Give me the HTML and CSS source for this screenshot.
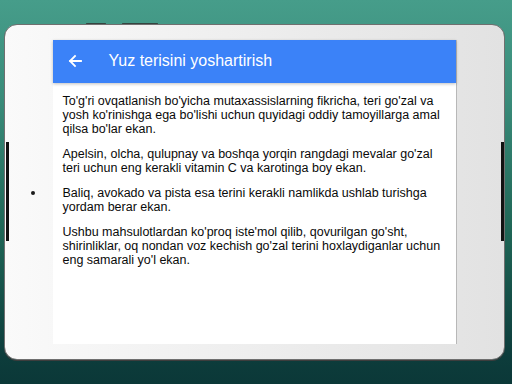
FILE: index.html
```html
<!DOCTYPE html>
<html>
<head>
<meta charset="utf-8">
<link rel="stylesheet" href="styles.css">
</head>
<body>
<div class="stage">
  <div class="tablet">
    <span class="top-btn top-btn-a"></span>
    <span class="top-btn top-btn-b"></span>
    <span class="side-btn side-left"></span>
    <span class="side-btn side-right"></span>
    <span class="dot"></span>
    <div class="screen">
      <header class="appbar">
        <svg class="back" width="16" height="16" viewBox="0 0 16 16">
          <path d="M14 8H3M8 3L3 8l5 5" fill="none" stroke="#fff" stroke-width="1.8" stroke-linecap="square"/>
        </svg>
        <h1 class="title">Yuz terisini yoshartirish</h1>
      </header>
      <main class="content">
        <p>To'g'ri ovqatlanish bo'yicha mutaxassislarning fikricha, teri go'zal va yosh ko'rinishga ega bo'lishi uchun quyidagi oddiy tamoyillarga amal qilsa bo'lar ekan.</p>
        <p>Apelsin, olcha, qulupnay va boshqa yorqin rangdagi mevalar go'zal teri uchun eng kerakli vitamin C va karotinga boy ekan.</p>
        <p>Baliq, avokado va pista esa terini kerakli namlikda ushlab turishga yordam berar ekan.</p>
        <p>Ushbu mahsulotlardan ko'proq iste'mol qilib, qovurilgan go'sht, shirinliklar, oq nondan voz kechish go'zal terini hoxlaydiganlar uchun eng samarali yo'l ekan.</p>
      </main>
    </div>
  </div>
</div>
</body>
</html>
```

FILE: styles.css
```css
html, body {
  margin: 0;
  padding: 0;
}
body {
  width: 512px;
  height: 384px;
  overflow: hidden;
  font-family: "Liberation Sans", Arial, sans-serif;
}
.stage {
  width: 512px;
  height: 384px;
  box-sizing: border-box;
  padding: 24px 7px 24px 4px;
  background: linear-gradient(to bottom, #469d8a 0%, #3a8c7a 25%, #1f6656 60%, #0d3d3c 92%, #0b3838 100%);
}
.tablet {
  position: relative;
  box-sizing: border-box;
  width: 501px;
  height: 336px;
  border: 1.5px solid #6f6f6f;
  border-radius: 13px;
  background: linear-gradient(to right, #fafafa 0%, #f0f0f0 40%, #e2e2e2 100%);
  box-shadow: 0 1px 0 #3d3d3d;
  padding: 14.5px 0 0 47.5px;
}
.top-btn {
  position: absolute;
  top: -2.5px;
  height: 1px;
  background: #34443f;
  border-radius: 1px;
}
.top-btn-a { left: 81px; width: 20px; }
.top-btn-b { left: 117px; width: 36px; }
.side-btn {
  position: absolute;
  top: 117px;
  width: 3px;
  height: 99px;
  background: #111;
}
.side-left { left: 0.5px; }
.side-right { right: 0.5px; }
.dot {
  position: absolute;
  left: 26px;
  top: 166px;
  width: 4px;
  height: 4px;
  border-radius: 50%;
  background: #1a1a1a;
}
.screen {
  width: 404px;
  height: 304px;
  background: #fff;
  border-right: 1px solid #b8b8b8;
  box-sizing: border-box;
}
.appbar {
  height: 43px;
  background: #3b82f8;
  display: flex;
  align-items: center;
  padding-left: 14px;
  box-shadow: 0 1px 3px rgba(0,0,0,0.25);
}
.back {
  display: block;
  margin-right: 26px;
}
.title {
  margin: 0;
  color: #fff;
  font-size: 16px;
  font-weight: normal;
}
.content {
  padding: 11px 10px 0 10px;
  color: #0a0a0a;
  font-size: 12.5px;
  line-height: 14px;
}
.content p {
  margin: 0 0 11px 0;
}
```
